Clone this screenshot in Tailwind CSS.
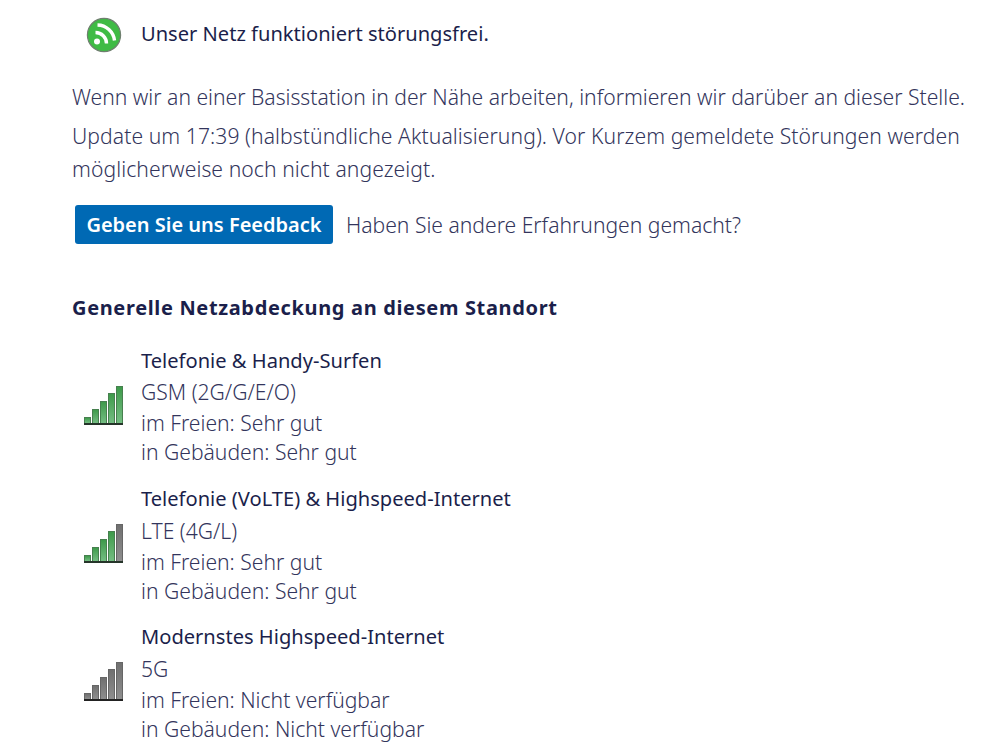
<!DOCTYPE html>
<html lang="de">
  <head>
    <meta charset="UTF-8" />
    <title>Netzstatus</title>
    <script src="https://cdn.jsdelivr.net/npm/@tailwindcss/browser@4"></script>
  </head>
  <body class="bg-white h-[752px] overflow-hidden font-['Noto_Sans',sans-serif] font-light text-[#33355c] text-[21.1px] leading-[29px]">
    <div class="pl-[72px] w-[981px]">
      <!-- status -->
      <div class="flex items-center h-[36px] mt-[17px]">
        <svg class="ml-[14px] w-[36px] h-[36px]" viewBox="0 0 36 36">
          <circle cx="18" cy="18" r="16.6" fill="#3fbb45" stroke="#6f7f6f" stroke-width="1.2" />
          <circle cx="11" cy="24.5" r="3" fill="#fff" />
          <path d="M9.5 15.5a11 11 0 0 1 11 11" fill="none" stroke="#fff" stroke-width="3.4" />
          <path d="M11.5 8a17.5 17.5 0 0 1 17 15.5" fill="none" stroke="#fff" stroke-width="3.4" />
        </svg>
        <p class="ml-[19px] mb-[3px] text-[20.1px] font-normal text-[#1b1f4b]">Unser Netz funktioniert störungsfrei.</p>
      </div>

      <p class="mt-[29px]">Wenn wir an einer Basisstation in der Nähe arbeiten, informieren wir darüber an dieser Stelle.</p>
      <p class="mt-[8px] leading-[33px] tracking-[0.08px]">Update um 17:39 (halbstündliche Aktualisierung). Vor Kurzem gemeldete Störungen werden<br />möglicherweise noch nicht angezeigt.</p>

      <div class="flex items-center mt-[20px]">
        <button class="ml-[3px] h-[39px] w-[258px] bg-[#0069b4] rounded-[3px] text-white text-[20px] font-semibold">Geben Sie uns Feedback</button>
        <span class="ml-[13px]">Haben Sie andere Erfahrungen gemacht?</span>
      </div>

      <h2 class="mt-[49px] font-bold text-[20px] tracking-[0.65px] text-[#1b1f4b]">Generelle Netzabdeckung an diesem Standort</h2>

      <!-- coverage rows -->
      <div class="mt-[24px] flex flex-col gap-[18px]">
        <div class="flex items-center">
          <div class="ml-[12px] mb-[2px] w-[39px] h-[39px] flex items-end gap-px border-b-2 border-[#26352a]">
            <div class="w-[7px] h-[6px] border border-b-0 border-[#47804f] bg-linear-to-b from-[#3d9a4a] to-[#74bd82]"></div>
            <div class="w-[7px] h-[14px] border border-b-0 border-[#47804f] bg-linear-to-b from-[#3d9a4a] to-[#74bd82]"></div>
            <div class="w-[7px] h-[22px] border border-b-0 border-[#47804f] bg-linear-to-b from-[#3d9a4a] to-[#74bd82]"></div>
            <div class="w-[7px] h-[30px] border border-b-0 border-[#47804f] bg-linear-to-b from-[#3d9a4a] to-[#74bd82]"></div>
            <div class="w-[7px] h-[37px] border border-b-0 border-[#47804f] bg-linear-to-b from-[#3d9a4a] to-[#74bd82]"></div>
          </div>
          <div class="ml-[18px]">
            <h3 class="text-[#1b1f4b] text-[20.1px] font-normal leading-[30px]">Telefonie &amp; Handy-Surfen</h3>
            <p class="leading-[32px]">GSM (2G/G/E/O)</p>
            <p>im Freien: Sehr gut</p>
            <p>in Gebäuden: Sehr gut</p>
          </div>
        </div>

        <div class="flex items-center -mb-px">
          <div class="ml-[12px] mb-[2px] w-[39px] h-[39px] flex items-end gap-px border-b-2 border-[#26352a]">
            <div class="w-[7px] h-[6px] border border-b-0 border-[#47804f] bg-linear-to-b from-[#3d9a4a] to-[#74bd82]"></div>
            <div class="w-[7px] h-[14px] border border-b-0 border-[#47804f] bg-linear-to-b from-[#3d9a4a] to-[#74bd82]"></div>
            <div class="w-[7px] h-[22px] border border-b-0 border-[#47804f] bg-linear-to-b from-[#3d9a4a] to-[#74bd82]"></div>
            <div class="w-[7px] h-[30px] border border-b-0 border-[#47804f] bg-linear-to-b from-[#3d9a4a] to-[#74bd82]"></div>
            <div class="w-[7px] h-[37px] border border-b-0 border-[#666] bg-linear-to-b from-[#707070] to-[#8e8e8e]"></div>
          </div>
          <div class="ml-[18px]">
            <h3 class="text-[#1b1f4b] text-[20.1px] font-normal leading-[30px]">Telefonie (VoLTE) &amp; Highspeed-Internet</h3>
            <p class="leading-[32px] pt-px">LTE (4G/L)</p>
            <p>im Freien: Sehr gut</p>
            <p>in Gebäuden: Sehr gut</p>
          </div>
        </div>

        <div class="flex items-center">
          <div class="ml-[12px] mb-[2px] w-[39px] h-[39px] flex items-end gap-px border-b-2 border-[#222]">
            <div class="w-[7px] h-[6px] border border-b-0 border-[#666] bg-linear-to-b from-[#707070] to-[#8e8e8e]"></div>
            <div class="w-[7px] h-[14px] border border-b-0 border-[#666] bg-linear-to-b from-[#707070] to-[#8e8e8e]"></div>
            <div class="w-[7px] h-[22px] border border-b-0 border-[#666] bg-linear-to-b from-[#707070] to-[#8e8e8e]"></div>
            <div class="w-[7px] h-[30px] border border-b-0 border-[#666] bg-linear-to-b from-[#707070] to-[#8e8e8e]"></div>
            <div class="w-[7px] h-[37px] border border-b-0 border-[#666] bg-linear-to-b from-[#707070] to-[#8e8e8e]"></div>
          </div>
          <div class="ml-[18px]">
            <h3 class="text-[#1b1f4b] text-[20.1px] font-normal leading-[30px]">Modernstes Highspeed-Internet</h3>
            <p class="leading-[32px] pt-px">5G</p>
            <p>im Freien: Nicht verfügbar</p>
            <p>in Gebäuden: Nicht verfügbar</p>
          </div>
        </div>
      </div>
    </div>
  </body>
</html>
